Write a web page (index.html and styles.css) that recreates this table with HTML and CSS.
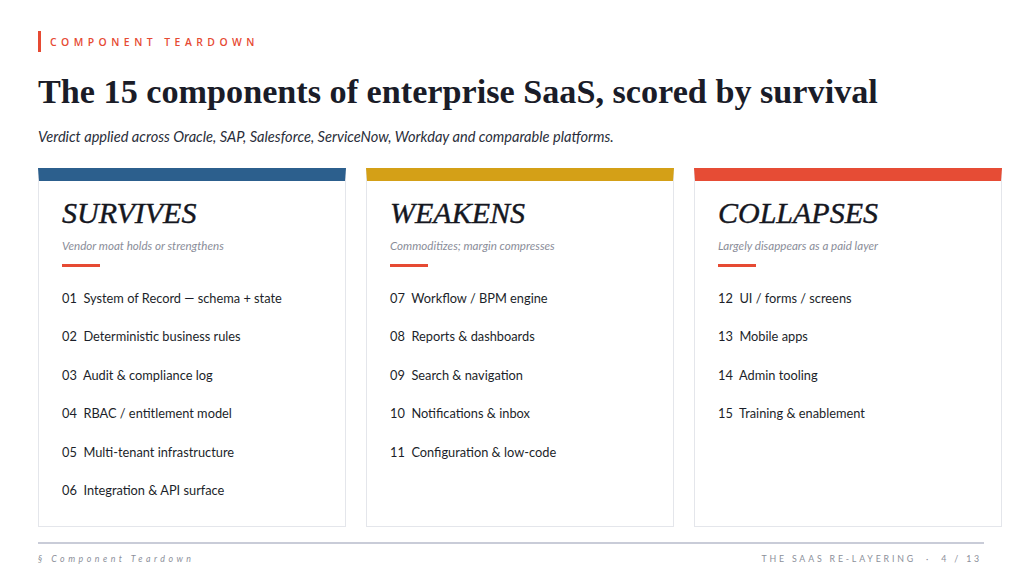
FILE: index.html
```html
<!DOCTYPE html>
<html lang="en">
<head>
<meta charset="utf-8">
<title>Component Teardown</title>
<link rel="stylesheet" href="styles.css">
</head>
<body>
<div class="slide">
  <div class="eyebrow">COMPONENT TEARDOWN</div>
  <h1 class="title">The 15 components of enterprise SaaS, scored by survival</h1>
  <p class="lede">Verdict applied across Oracle, SAP, Salesforce, ServiceNow, Workday and comparable platforms.</p>

  <div class="cards">
    <section class="card card-blue">
      <h2 class="card-title">SURVIVES</h2>
      <p class="card-sub">Vendor moat holds or strengthens</p>
      <div class="rule"></div>
      <ul class="items">
        <li>01&nbsp; System of Record — schema + state</li>
        <li>02&nbsp; Deterministic business rules</li>
        <li>03&nbsp; Audit &amp; compliance log</li>
        <li>04&nbsp; RBAC / entitlement model</li>
        <li>05&nbsp; Multi-tenant infrastructure</li>
        <li>06&nbsp; Integration &amp; API surface</li>
      </ul>
    </section>
    <section class="card card-gold">
      <h2 class="card-title">WEAKENS</h2>
      <p class="card-sub">Commoditizes; margin compresses</p>
      <div class="rule"></div>
      <ul class="items">
        <li>07&nbsp; Workflow / BPM engine</li>
        <li>08&nbsp; Reports &amp; dashboards</li>
        <li>09&nbsp; Search &amp; navigation</li>
        <li>10&nbsp; Notifications &amp; inbox</li>
        <li>11&nbsp; Configuration &amp; low-code</li>
      </ul>
    </section>
    <section class="card card-red">
      <h2 class="card-title">COLLAPSES</h2>
      <p class="card-sub">Largely disappears as a paid layer</p>
      <div class="rule"></div>
      <ul class="items">
        <li>12&nbsp; UI / forms / screens</li>
        <li>13&nbsp; Mobile apps</li>
        <li>14&nbsp; Admin tooling</li>
        <li>15&nbsp; Training &amp; enablement</li>
      </ul>
    </section>
  </div>

  <footer class="footer">
    <span class="foot-left">§ Component Teardown</span>
    <span class="foot-right">THE SAAS RE-LAYERING &nbsp;·&nbsp; 4 / 13</span>
  </footer>
</div>
</body>
</html>
```

FILE: styles.css
```css
html, body {
  margin: 0;
  padding: 0;
  background: #ffffff;
}

.slide {
  width: 1024px;
  height: 576px;
  box-sizing: border-box;
  padding: 31px 40px 0 38px;
  font-family: Lato, "Open Sans", sans-serif;
  color: #1c1f2a;
  overflow: hidden;
}

.eyebrow {
  height: 21px;
  display: flex;
  align-items: center;
  border-left: 3px solid #e64a33;
  padding-left: 9px;
  font-size: 10.4px;
  font-weight: 600;
  letter-spacing: 0.43em;
  color: #e64a33;
  font-family: "Open Sans", Lato, sans-serif;
}

.title {
  margin: 20px 0 0 0;
  font-family: "Liberation Serif", "DejaVu Serif", serif;
  font-weight: bold;
  font-size: 34.2px;
  line-height: 40px;
  color: #1a1c28;
}

.lede {
  margin: 15px 0 0 0;
  font-style: italic;
  font-size: 14.6px;
  line-height: 20px;
  color: #2a2e3a;
}

.cards {
  margin-top: 21px;
  display: grid;
  grid-template-columns: repeat(3, 308px);
  column-gap: 20px;
}

.card {
  height: 359px;
  box-sizing: border-box;
  border: 1px solid #e4e6eb;
  border-top: 13px solid #2c5f8d;
  padding: 16px 20px 0 23px;
}

.card-blue { border-top-color: #2c5f8d; }
.card-gold { border-top-color: #d4a017; }
.card-red { border-top-color: #e64c35; }

.card-title {
  margin: 0;
  font-family: "Liberation Serif", "DejaVu Serif", serif;
  font-style: italic;
  font-weight: normal;
  font-size: 30px;
  line-height: 32px;
  color: #15171f;
  -webkit-text-stroke: 0.4px #15171f;
}

.card-sub {
  margin: 9px 0 0 0;
  font-style: italic;
  font-size: 11.6px;
  line-height: 16px;
  color: #8a8d99;
}

.rule {
  margin-top: 10px;
  width: 38px;
  height: 3px;
  background: #e64a33;
}

.items {
  list-style: none;
  margin: 12px 0 0 0;
  padding: 0;
}

.items li {
  font-size: 12.8px;
  line-height: 38.4px;
  color: #1c1f2a;
}

.footer {
  margin-top: 15px;
  border-top: 2px solid #c9ccd8;
  padding-top: 8px;
  width: 946px;
  display: flex;
  justify-content: space-between;
  font-size: 8.8px;
  line-height: 14px;
  color: #8c8f9a;
}

.foot-left {
  font-style: italic;
  letter-spacing: 0.4em;
}

.foot-right {
  letter-spacing: 0.32em;
  padding-right: 2px;
}
```
